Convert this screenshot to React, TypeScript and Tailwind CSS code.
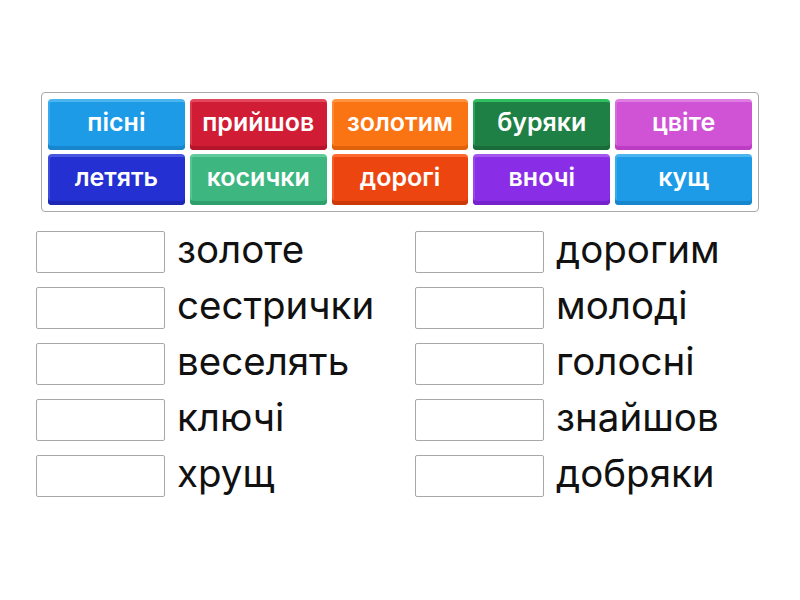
import React from "react";

type Tile = { t: string; cls: string };

const tiles: Tile[] = [
  { t: "пісні", cls: "bg-[#1d9be6] border-[#4cb5f0] shadow-[inset_0_-4px_0_#1786cc,inset_2px_0_0_#3aaaee]" },
  { t: "прийшов", cls: "bg-[#d01d35] border-[#e2475b] shadow-[inset_0_-4px_0_#b5152b,inset_2px_0_0_#dc3a4f]" },
  { t: "золотим", cls: "bg-[#fb7413] border-[#ff9440] shadow-[inset_0_-4px_0_#e0620a,inset_2px_0_0_#ff8a33]" },
  { t: "буряки", cls: "bg-[#1e8044] border-[#30c062] shadow-[inset_0_-4px_0_#196c39,inset_2px_0_0_#28a555]" },
  { t: "цвіте", cls: "bg-[#d053d6] border-[#de7ee2] shadow-[inset_0_-4px_0_#bd3cc4,inset_2px_0_0_#d86bdc]" },
  { t: "летять", cls: "bg-[#2430d2] border-[#4856e0] shadow-[inset_0_-4px_0_#1c27b4,inset_2px_0_0_#3d4adc]" },
  { t: "косички", cls: "bg-[#3db680] border-[#62cb9b] shadow-[inset_0_-4px_0_#2f9f6c,inset_2px_0_0_#55c491]" },
  { t: "дорогі", cls: "bg-[#ec4510] border-[#ff6a30] shadow-[inset_0_-4px_0_#cb3908,inset_2px_0_0_#f95c22]" },
  { t: "вночі", cls: "bg-[#8a2de6] border-[#a457ee] shadow-[inset_0_-4px_0_#7622cc,inset_2px_0_0_#9a48ec]" },
  { t: "кущ", cls: "bg-[#1d9be6] border-[#4cb5f0] shadow-[inset_0_-4px_0_#1786cc,inset_2px_0_0_#3aaaee]" },
];

const left = ["золоте", "сестрички", "веселять", "ключі", "хрущ"];
const right = ["дорогим", "молоді", "голосні", "знайшов", "добряки"];

function Row({ word }: { word: string }) {
  return (
    <div className="flex items-center h-[42px]">
      <div className="w-[129px] h-[42px] border border-[#a8a8a8] rounded-[2px] bg-white shrink-0" />
      <span className="ml-[12px] text-[38.5px] leading-none text-[#111] -mt-[6px]">{word}</span>
    </div>
  );
}

export default function App() {
  return (
    <div
      className="w-[800px] h-[600px] bg-white overflow-hidden"
      style={{ fontFamily: "Inter, 'Noto Sans', sans-serif" }}
    >
      <div className="pt-[92px] pl-[41px]">
        <div className="w-[718px] h-[120px] border border-[#a9a9a9] rounded-[4px] p-[6px] grid grid-cols-5 grid-rows-2 gap-x-[5px] gap-y-[4px]">
          {tiles.map((x, i) => (
            <div
              key={i}
              className={`rounded-[4px] border-t-[3px] flex items-center justify-center text-white text-[25px] font-semibold pb-[6px] ${x.cls}`}
            >
              {x.t}
            </div>
          ))}
        </div>
      </div>
      <div className="flex pt-[19px] pl-[36px]">
        <div className="flex flex-col gap-[14px] w-[379px]">
          {left.map((w) => (
            <Row key={w} word={w} />
          ))}
        </div>
        <div className="flex flex-col gap-[14px]">
          {right.map((w) => (
            <Row key={w} word={w} />
          ))}
        </div>
      </div>
    </div>
  );
}
